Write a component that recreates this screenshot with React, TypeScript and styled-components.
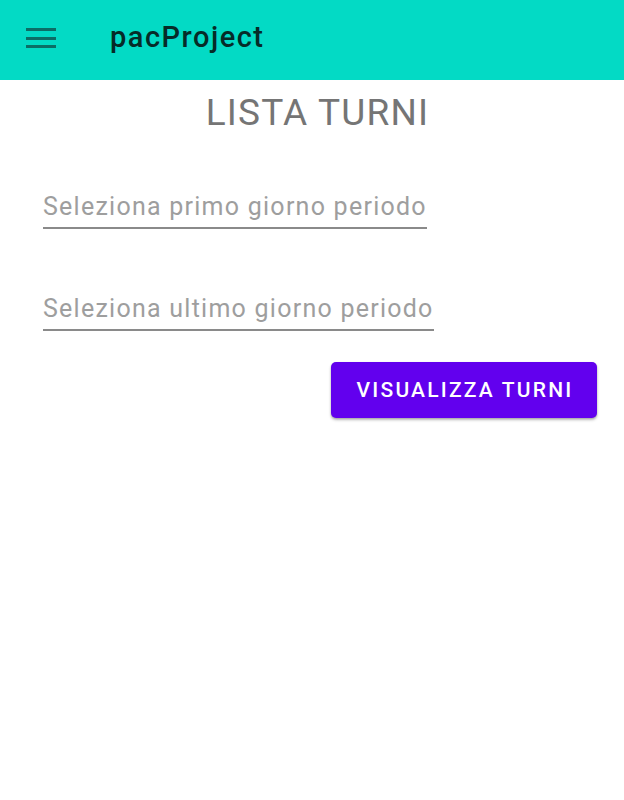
import React from "react";
import styled, { createGlobalStyle } from "styled-components";

const Global = createGlobalStyle`
  html, body { margin: 0; padding: 0; background: #ffffff; }
  body { font-family: Roboto, "Noto Sans", sans-serif; }
`;

const Screen = styled.div`
  width: 624px;
  min-height: 800px;
  display: flex;
  flex-direction: column;
`;

const AppBar = styled.header`
  height: 80px;
  background: #03dac5;
  display: flex;
  align-items: center;
  padding-left: 26px;
  box-sizing: border-box;
`;

const MenuButton = styled.div`
  width: 30px;
  height: 20px;
  display: flex;
  flex-direction: column;
  justify-content: space-between;
  margin-top: -4px;
`;

const MenuBar = styled.span`
  display: block;
  height: 3px;
  background: #0b6e66;
`;

const Title = styled.h1`
  margin: 0 0 6px 54px;
  font-size: 29px;
  font-weight: 500;
  color: #062b28;
  letter-spacing: 1.5px;
  line-height: 40px;
`;

const Content = styled.main`
  display: flex;
  flex-direction: column;
  padding: 11px 27px 0 43px;
`;

const PageTitle = styled.h2`
  margin: 0;
  font-size: 37px;
  font-weight: 400;
  line-height: 44px;
  color: #757575;
  text-align: center;
  letter-spacing: 1.2px;
  padding-right: 5px;
`;

const Field = styled.div<{ $top: number }>`
  margin-top: ${(p) => p.$top}px;
  display: flex;
`;

const Hint = styled.span`
  font-size: 25px;
  line-height: 30px;
  letter-spacing: 1.25px;
  color: #9e9e9e;
  padding-bottom: 5px;
  border-bottom: 2px solid #8a8a8a;
`;

const Actions = styled.div`
  display: flex;
  justify-content: flex-end;
  margin-top: 31px;
`;

const PrimaryButton = styled.button`
  width: 266px;
  height: 56px;
  padding: 0;
  border: none;
  border-radius: 5px;
  background: #6200ee;
  color: #ffffff;
  font-family: Roboto, sans-serif;
  font-size: 21px;
  font-weight: 500;
  letter-spacing: 2.2px;
  text-indent: 2px;
  box-shadow: 0 2px 3px rgba(0, 0, 0, 0.25), 0 1px 2px rgba(0, 0, 0, 0.15);
  cursor: pointer;
`;

export default function App() {
  return (
    <>
      <Global />
      <Screen>
        <AppBar>
          <MenuButton>
            <MenuBar />
            <MenuBar />
            <MenuBar />
          </MenuButton>
          <Title>pacProject</Title>
        </AppBar>
        <Content>
          <PageTitle>LISTA TURNI</PageTitle>
          <Field $top={57}>
            <Hint>Seleziona primo giorno periodo</Hint>
          </Field>
          <Field $top={65}>
            <Hint>Seleziona ultimo giorno periodo</Hint>
          </Field>
          <Actions>
            <PrimaryButton>VISUALIZZA TURNI</PrimaryButton>
          </Actions>
        </Content>
      </Screen>
    </>
  );
}
